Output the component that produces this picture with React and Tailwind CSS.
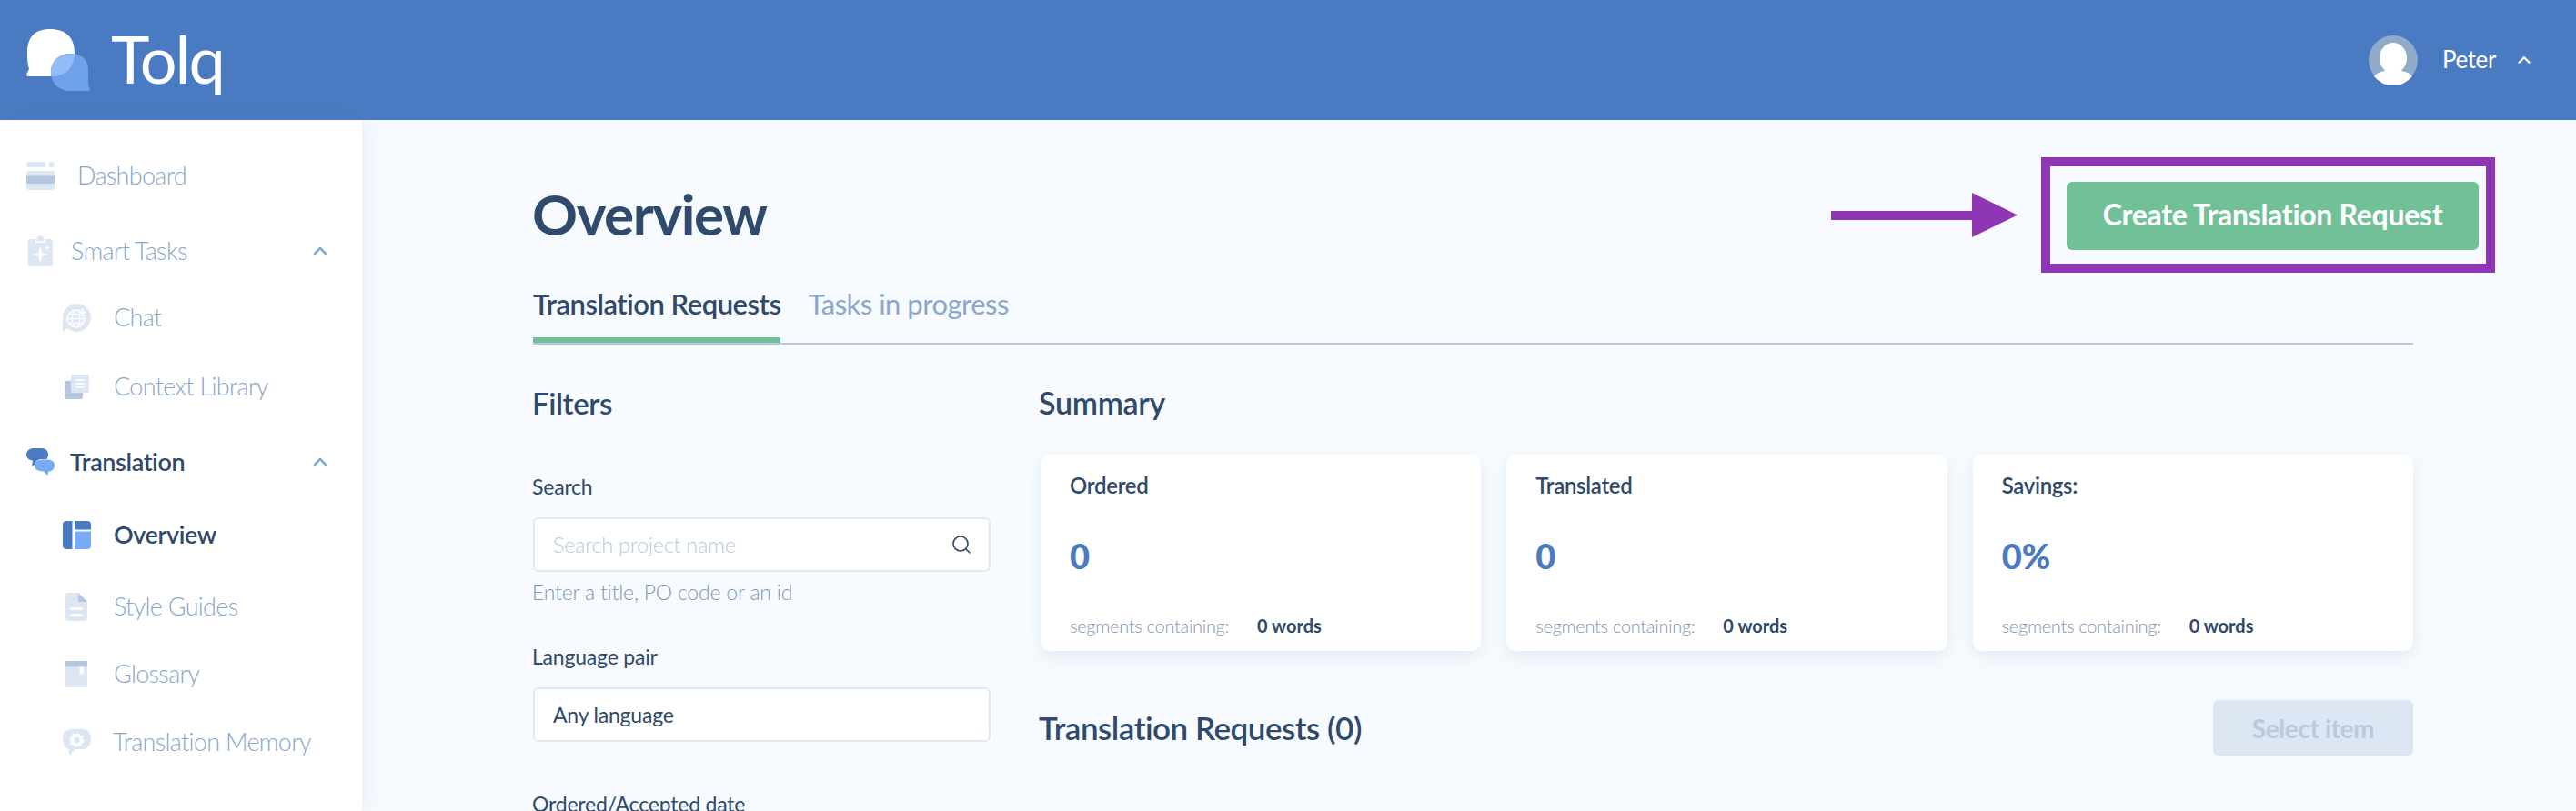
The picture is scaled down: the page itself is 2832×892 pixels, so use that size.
import { ChevronUp, Search } from "lucide-react"

const LIGHT = "#dce7f3"
const DARK = "#b4c7de"

function Sparkle({ cx, cy, r, fill = "#fff" }) {
  const k = r * 0.22
  return (
    <path
      fill={fill}
      d={`M${cx} ${cy - r}L${cx + k} ${cy - k}L${cx + r} ${cy}L${cx + k} ${cy + k}L${cx} ${cy + r}L${cx - k} ${cy + k}L${cx - r} ${cy}L${cx - k} ${cy - k}Z`}
    />
  )
}

function DashboardIcon() {
  return (
    <svg width="31" height="31" viewBox="0 0 31 31">
      <rect x="0" y="0" width="22" height="6" rx="3" fill={LIGHT} />
      <circle cx="27.5" cy="3" r="3.2" fill={LIGHT} />
      <rect x="0" y="10" width="31" height="21" rx="3" fill={LIGHT} />
      <rect x="0" y="15.5" width="31" height="8.5" fill={DARK} />
    </svg>
  )
}

function TasksIcon() {
  return (
    <svg width="27" height="34" viewBox="0 0 27 34">
      <rect x="0" y="4" width="27" height="30" rx="2.5" fill={LIGHT} />
      <path d="M8 8V5.5C8 2.5 10.5 1 13.5 1S19 2.5 19 5.5V8Z" fill="#fff" />
      <path d="M9.5 6.5V5C9.5 3 11.5 0 13.5 0S17.5 3 17.5 5V6.5Z" fill={LIGHT} />
      <Sparkle cx={13.5} cy={21} r={9} />
      <Sparkle cx={21} cy={13.5} r={3.5} />
    </svg>
  )
}

function ChatIcon() {
  return (
    <svg width="31" height="31" viewBox="0 0 31 31">
      <path d="M15.5 0A15.5 15.5 0 1 1 5 27L1 31C0 31 0 30 0 29V15.5A15.5 15.5 0 0 1 15.5 0Z" fill={LIGHT} />
      <g fill="none" stroke="#fff" strokeWidth="1.4">
        <circle cx="14.5" cy="16.5" r="9.5" />
        <ellipse cx="14.5" cy="16.5" rx="4.2" ry="9.5" />
        <path d="M5 16.5H24M6.5 11.5H22M6.5 21.5H22" />
      </g>
      <Sparkle cx={21.5} cy={9.5} r={7.5} fill={LIGHT} />
      <Sparkle cx={21.5} cy={9.5} r={5.5} />
    </svg>
  )
}

function LibraryIcon() {
  return (
    <svg width="27" height="27" viewBox="0 0 27 27">
      <rect x="0" y="7" width="20" height="20" rx="2" fill={DARK} />
      <rect x="7" y="0" width="20" height="20" rx="2" fill={LIGHT} />
      <path d="M12 6H22M12 10H22M12 14H22" stroke="#fff" strokeWidth="1.3" />
    </svg>
  )
}

function TranslationIcon() {
  return (
    <svg width="31" height="30" viewBox="0 0 31 30">
      <path d="M8 0H17C21.5 0 24 3 24 7C24 11 21.5 14 17 14H14L6 20L7 13.5C3 13 0 10.5 0 7C0 3 3.5 0 8 0Z" fill="#4a7bc2" />
      <path d="M17 12H24C28 12 31 14.5 31 19C31 23 28 26 24 26L23 30L18 26C13 26 9 23 9 19C9 14.5 13 12 17 12Z" fill="#fff" />
      <path d="M18 12.5H24C28 12.5 31 15 31 19C31 23 28 25.5 24.5 25.5L23.5 30L19 25.5C13.5 25.5 9 23.5 9 19C9 15 13 12.5 18 12.5Z" fill="#78abf5" />
    </svg>
  )
}

function OverviewIcon() {
  return (
    <svg width="31" height="31" viewBox="0 0 31 31">
      <path d="M4 0H10.5V31H4C1.5 31 0 29.5 0 27V4C0 1.5 1.5 0 4 0Z" fill="#4a7bc2" />
      <path d="M13 0H27C29.5 0 31 1.5 31 4V9.5H13Z" fill="#4a7bc2" />
      <path d="M13 11.5H31V27C31 29.5 29.5 31 27 31H13Z" fill="#78abf5" />
    </svg>
  )
}

function DocIcon() {
  return (
    <svg width="24" height="31" viewBox="0 0 24 31">
      <path d="M3 0H14L24 10V28C24 30 23 31 21 31H3C1 31 0 30 0 28V3C0 1 1 0 3 0Z" fill={LIGHT} />
      <path d="M14 0L24 10H14Z" fill={DARK} />
      <rect x="5" y="16" width="14" height="3" rx="1.5" fill="#fff" />
      <rect x="5" y="23" width="14" height="3" rx="1.5" fill="#fff" />
    </svg>
  )
}

function BookIcon() {
  return (
    <svg width="24" height="29" viewBox="0 0 24 29">
      <rect x="0" y="0" width="24" height="29" rx="1.5" fill={LIGHT} />
      <path d="M1.5 0H22.5C23.5 0 24 .5 24 1.5V6.5H0V1.5C0 .5 .5 0 1.5 0Z" fill={DARK} />
      <path d="M15.5 6.5H20V15L17.75 13L15.5 15Z" fill="#fff" />
    </svg>
  )
}

function MemoryIcon() {
  return (
    <svg width="31" height="29" viewBox="0 0 31 29">
      <path d="M9 0H22C27.5 0 31 3.5 31 10C31 18 27 22 22 22H14L7 29V22C3 21 0 17 0 10C0 3.5 3.5 0 9 0Z" fill={LIGHT} />
      <circle cx="15.5" cy="12" r="5" fill="none" stroke="#fff" strokeWidth="3.6" />
      <circle cx="15.5" cy="12" r="7" fill="none" stroke="#fff" strokeWidth="2" strokeDasharray="2.6 2.9" />
    </svg>
  )
}

function Logo() {
  return (
    <svg width="70" height="68" viewBox="0 0 70 68" className="shrink-0">
      <path d="M26 0C43 0 53 9 53 26C53 43 43 52 26 52H2C0 52 0 50 1 48L3 44C1 38 1 32 1 26C1 9 9 0 26 0Z" fill="#fff" />
      <path d="M49 27C62 27 69 35 68 48V59C68 62 69 64 70 66C70 68 68 68 66 68H49C36 68 27 60 27 47C27 35 36 27 49 27Z" fill="#6da1ea" />
      <path d="M49 27C51 27 52 27 53 27.5C52 43 43 52 28 52C27.4 50.5 27 49 27 47C27 35 36 27 49 27Z" fill="#93bbf7" />
    </svg>
  )
}

function Avatar() {
  return (
    <svg width="54" height="54" viewBox="0 0 54 54" className="shrink-0">
      <circle cx="27" cy="27" r="27" fill="#8fabc9" />
      <ellipse cx="27" cy="25" rx="15" ry="17" fill="#fff" />
      <path d="M6 45C10 40 18 38 27 38S44 40 48 45A27 27 0 0 1 6 45Z" fill="#fff" />
    </svg>
  )
}

const navItems = [
  { label: "Dashboard", icon: <DashboardIcon />, box: "ml-[29px] w-[56px]", gap: "" },
  { label: "Smart Tasks", icon: <TasksIcon />, box: "ml-[31px] w-[47px]", gap: "mt-[43px]", chevron: true },
  { label: "Chat", icon: <ChatIcon />, box: "ml-[69px] w-[56px]", gap: "mt-[33px]" },
  { label: "Context Library", icon: <LibraryIcon />, box: "ml-[71px] w-[54px]", gap: "mt-[36px]" },
  { label: "Translation", icon: <TranslationIcon />, box: "ml-[29px] w-[48px]", gap: "mt-[43px]", chevron: true, section: true },
  { label: "Overview", icon: <OverviewIcon />, box: "ml-[69px] w-[56px]", gap: "mt-[40px]", active: true },
  { label: "Style Guides", icon: <DocIcon />, box: "ml-[72px] w-[53px]", gap: "mt-[39px]" },
  { label: "Glossary", icon: <BookIcon />, box: "ml-[72px] w-[53px]", gap: "mt-[34px]" },
  { label: "Translation Memory", icon: <MemoryIcon />, box: "ml-[69px] w-[55px]", gap: "mt-[35px]" },
]

function NavItem({ item }) {
  const tone = item.active || item.section ? "text-[#2f4a6b] font-semibold tracking-[-0.4px]" : "text-[#8aa7cb] font-light tracking-[-0.7px]"
  return (
    <div className={`flex h-10 items-center ${item.gap}`}>
      <div className={`flex shrink-0 items-center ${item.box}`}>{item.icon}</div>
      <span className={`mb-[2px] text-[27px] leading-none whitespace-nowrap ${tone}`}>{item.label}</span>
      {item.chevron && (
        <ChevronUp size={24} strokeWidth={2.6} className="absolute left-[340px] text-[#8aa7cb]" />
      )}
    </div>
  )
}

function StatCard({ title, value }) {
  return (
    <div className="flex h-[216px] flex-1 flex-col rounded-[10px] bg-white pt-[19px] pr-[33px] pl-[32px] shadow-[0_6px_18px_rgba(74,104,150,0.12)]">
      <div className="h-[30px] text-[24px] leading-[30px] font-semibold tracking-[-0.3px] text-[#2f4a6b]">{title}</div>
      <div className="mt-[40px] h-[44px] text-[38px] leading-[44px] font-black text-[#4a7bc2]">{value}</div>
      <div className="mt-[42px] flex h-[26px] items-center gap-[31px] text-[20px] whitespace-nowrap">
        <span className="font-light tracking-[-0.3px] text-[#7f97b2]">segments containing:</span>
        <span className="font-bold tracking-[0px] text-[#2f4a6b]">0 words</span>
      </div>
    </div>
  )
}

function FieldLabel({ children, className }) {
  return (
    <div className={`h-[30px] text-[23px] leading-[30px] tracking-[-0.2px] whitespace-nowrap text-[#2f4a6b] ${className}`}>
      {children}
    </div>
  )
}

export default function App() {
  return (
    <div className="flex h-[892px] w-[2832px] flex-col overflow-hidden bg-[#f7fbff] font-['Lato',sans-serif]">
      <header className="flex h-[132px] shrink-0 items-center bg-[#4a7bc2] pr-[46px] pl-[29px] text-white">
        <div className="flex items-center">
          <Logo />
          <span className="mb-[4px] ml-[23px] text-[72px] leading-none font-normal tracking-[-2px]">Tolq</span>
        </div>
        <div className="ml-auto flex items-center">
          <Avatar />
          <span className="mb-[2px] ml-[27px] text-[26px] leading-none tracking-[-0.4px]">Peter</span>
          <ChevronUp size={22} strokeWidth={2.6} className="ml-[20px]" />
        </div>
      </header>

      <div className="flex min-h-0 flex-1">
        <aside className="relative z-10 w-[398px] shrink-0 bg-white pt-[41px] shadow-[6px_0_22px_rgba(74,123,194,0.09)]">
          {navItems.map((item) => (
            <NavItem key={item.label} item={item} />
          ))}
        </aside>

        <main className="min-w-0 flex-1 pt-[68px] pr-[179px] pl-[187px]">
          {/* Title row, the button pokes out past the content edge */}
          <div className="relative mr-[-72px] flex h-[75px] items-center justify-between">
            <h1 className="mb-[5px] text-[62px] leading-none font-bold tracking-[-1.4px] text-[#2f4a6b]">Overview</h1>
            <button
              type="button"
              className="flex h-[75px] w-[453px] items-center justify-center rounded-[6px] bg-[#72c098] pb-[3px] text-[32px] font-bold tracking-[-0.3px] whitespace-nowrap text-white"
            >
              Create Translation Request
            </button>

            {/* Annotation drawn over the screenshot */}
            <div className="absolute top-[-27px] right-[-18px] h-[127px] w-[499px] border-x-[10px] border-y-[10px] border-[#8e36b4]" />
            <svg width="205" height="50" viewBox="0 0 205 50" className="absolute top-[12px] left-[1428px]">
              <path d="M0 20H155V0L205 24.5L155 49V30H0Z" fill="#8e36b4" />
            </svg>
          </div>

          <div className="mt-[25px] ml-px flex h-[79px] gap-[30px] border-b-2 border-[#b4c7dd] text-[31px] tracking-[-0.5px]">
            <div className="flex h-[77px] items-center border-b-[6px] border-[#72c098] pb-[2px] font-semibold whitespace-nowrap text-[#2f4a6b]">
              Translation Requests
            </div>
            <div className="flex h-[71px] items-center pb-[2px] whitespace-nowrap text-[#8aa7cb]">Tasks in progress</div>
          </div>

          <div className="mt-[44px] ml-px flex gap-[55px]">
            <section className="w-[503px] shrink-0">
              <h2 className="ml-[-1px] h-10 text-[33px] leading-10 font-semibold tracking-[-0.4px] text-[#2f4a6b]">Filters</h2>
              <FieldLabel className="mt-[57px] ml-[-1px]">Search</FieldLabel>
              <div className="mt-[19px] flex h-[60px] items-center justify-between rounded-[6px] border-2 border-[#dfe9f4] bg-white pr-[18px] pl-[20px]">
                <span className="mt-[2px] text-[23.5px] font-light tracking-[-0.3px] text-[#b9cadd]">Search project name</span>
                <Search size={24} strokeWidth={1.6} className="text-[#2f4a6b]" />
              </div>
              <div className="mt-[9px] ml-[-1px] h-[26px] text-[23px] leading-[26px] font-light tracking-[-0.2px] whitespace-nowrap text-[#7f97b2]">
                Enter a title, PO code or an id
              </div>
              <FieldLabel className="mt-[43px] ml-[-1px]">Language pair</FieldLabel>
              <div className="mt-[19px] flex h-[60px] items-center rounded-[6px] border-2 border-[#dfe9f4] bg-white pl-[20px] text-[23px] tracking-[-0.2px] text-[#2f4a6b]">
                Any language
              </div>
              <FieldLabel className="mt-[53px] ml-[-1px]">Ordered/Accepted date</FieldLabel>
            </section>

            <section className="min-w-0 flex-1">
              <h2 className="ml-[-2px] h-10 text-[34px] leading-10 font-semibold tracking-[-0.3px] text-[#2f4a6b]">Summary</h2>
              <div className="mt-[37px] flex gap-[28px]">
                <StatCard title="Ordered" value="0" />
                <StatCard title="Translated" value="0" />
                <StatCard title="Savings:" value="0%" />
              </div>
              <div className="mt-[54px] flex h-[61px] items-center justify-between">
                <h2 className="ml-[-2px] text-[35px] font-semibold tracking-[-0.5px] whitespace-nowrap text-[#2f4a6b]">
                  Translation Requests (0)
                </h2>
                <button
                  type="button"
                  className="flex h-[61px] w-[220px] items-center justify-center rounded-[6px] bg-[#dce7f3] text-[28px] font-bold tracking-[-0.4px] text-[#b9cadd]"
                >
                  Select item
                </button>
              </div>
            </section>
          </div>
        </main>
      </div>
    </div>
  )
}
